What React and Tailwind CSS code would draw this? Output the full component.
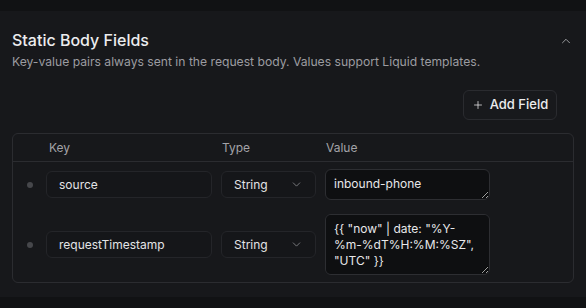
import React from "react";
import { ChevronUp, ChevronDown, Plus } from "lucide-react";

// Static body fields – rows shown in the table
const fields = [
  { key: "source", type: "String", value: "inbound-phone", h: "h-[31px]" },
  {
    key: "requestTimestamp",
    type: "String",
    value: '{{ "now" | date: "%Y-%m-%dT%H:%M:%SZ", "UTC" }}',
    h: "h-[61px]",
  },
];

const FieldRow = ({ field }) => (
  <div className="flex items-center pl-[1px] py-[7px]">
    {/* drag dot */}
    <div className="w-[32px] flex justify-center">
      <span className="w-[6px] h-[6px] rounded-full bg-[#46474b]" />
    </div>
    <input
      readOnly
      value={field.key}
      className="w-[166px] h-[27px] px-[12px] rounded-md border border-[#242529] bg-[#151619] text-[12px] text-[#e4e4e6] outline-none"
    />
    <div className="ml-[9px] w-[95px] h-[27px] pl-[12px] pr-[12px] flex items-center justify-between rounded-md border border-[#242529] bg-[#151619] text-[12px] text-[#e4e4e6]">
      <span>{field.type}</span>
      <ChevronDown size={13} strokeWidth={1.5} className="text-[#8a8b8f]" />
    </div>
    <textarea
      readOnly
      value={field.value}
      className={`ml-[9px] w-[165px] ${field.h} px-[8px] py-[6px] rounded-md border border-[#2d2e32] bg-[#0e0f11] text-[12px] leading-4 text-[#e8e8ea] outline-none`}
    />
  </div>
);

export default function App() {
  return (
    <div
      className="w-[586px] h-[308px] overflow-hidden bg-[#111214] pt-[11px]"
      style={{ fontFamily: "Inter, 'Noto Sans', sans-serif" }}
    >
      <div className="h-[286px] bg-[#17181b] pt-[17px]">
        {/* heading */}
        <div className="flex items-start justify-between pl-[12px] pr-[13px]">
          <div>
            <h2 className="text-[16px] leading-6 font-medium text-[#ececee]">
              Static Body Fields
            </h2>
            <p className="mt-[2px] text-[12.15px] leading-4 text-[#9c9ca1]">
              Key-value pairs always sent in the request body. Values support Liquid templates.
            </p>
          </div>
          <ChevronUp size={14} strokeWidth={1.5} className="mt-[6px] text-[#a9aaae]" />
        </div>

        {/* add button */}
        <div className="flex justify-end pr-[29px] mt-[20px]">
          <button className="h-[30px] w-[94px] flex items-center justify-center gap-[6px] rounded-md border border-[#2a2b2f] bg-[#18191c] text-[13px] font-medium text-[#ececee]">
            <Plus size={12} strokeWidth={1.5} />
            Add Field
          </button>
        </div>

        {/* table */}
        <div className="mx-[12px] mt-[13px] rounded-md border border-[#2b2c30]">
          <div className="flex items-center h-[28px] border-b border-[#2b2c30] text-[12px] text-[#a3a3a8]">
            <span className="ml-[36px] w-[173px]">Key</span>
            <span className="w-[104px]">Type</span>
            <span>Value</span>
          </div>
          {fields.map((f) => (
            <FieldRow key={f.key} field={f} />
          ))}
        </div>
      </div>
    </div>
  );
}
